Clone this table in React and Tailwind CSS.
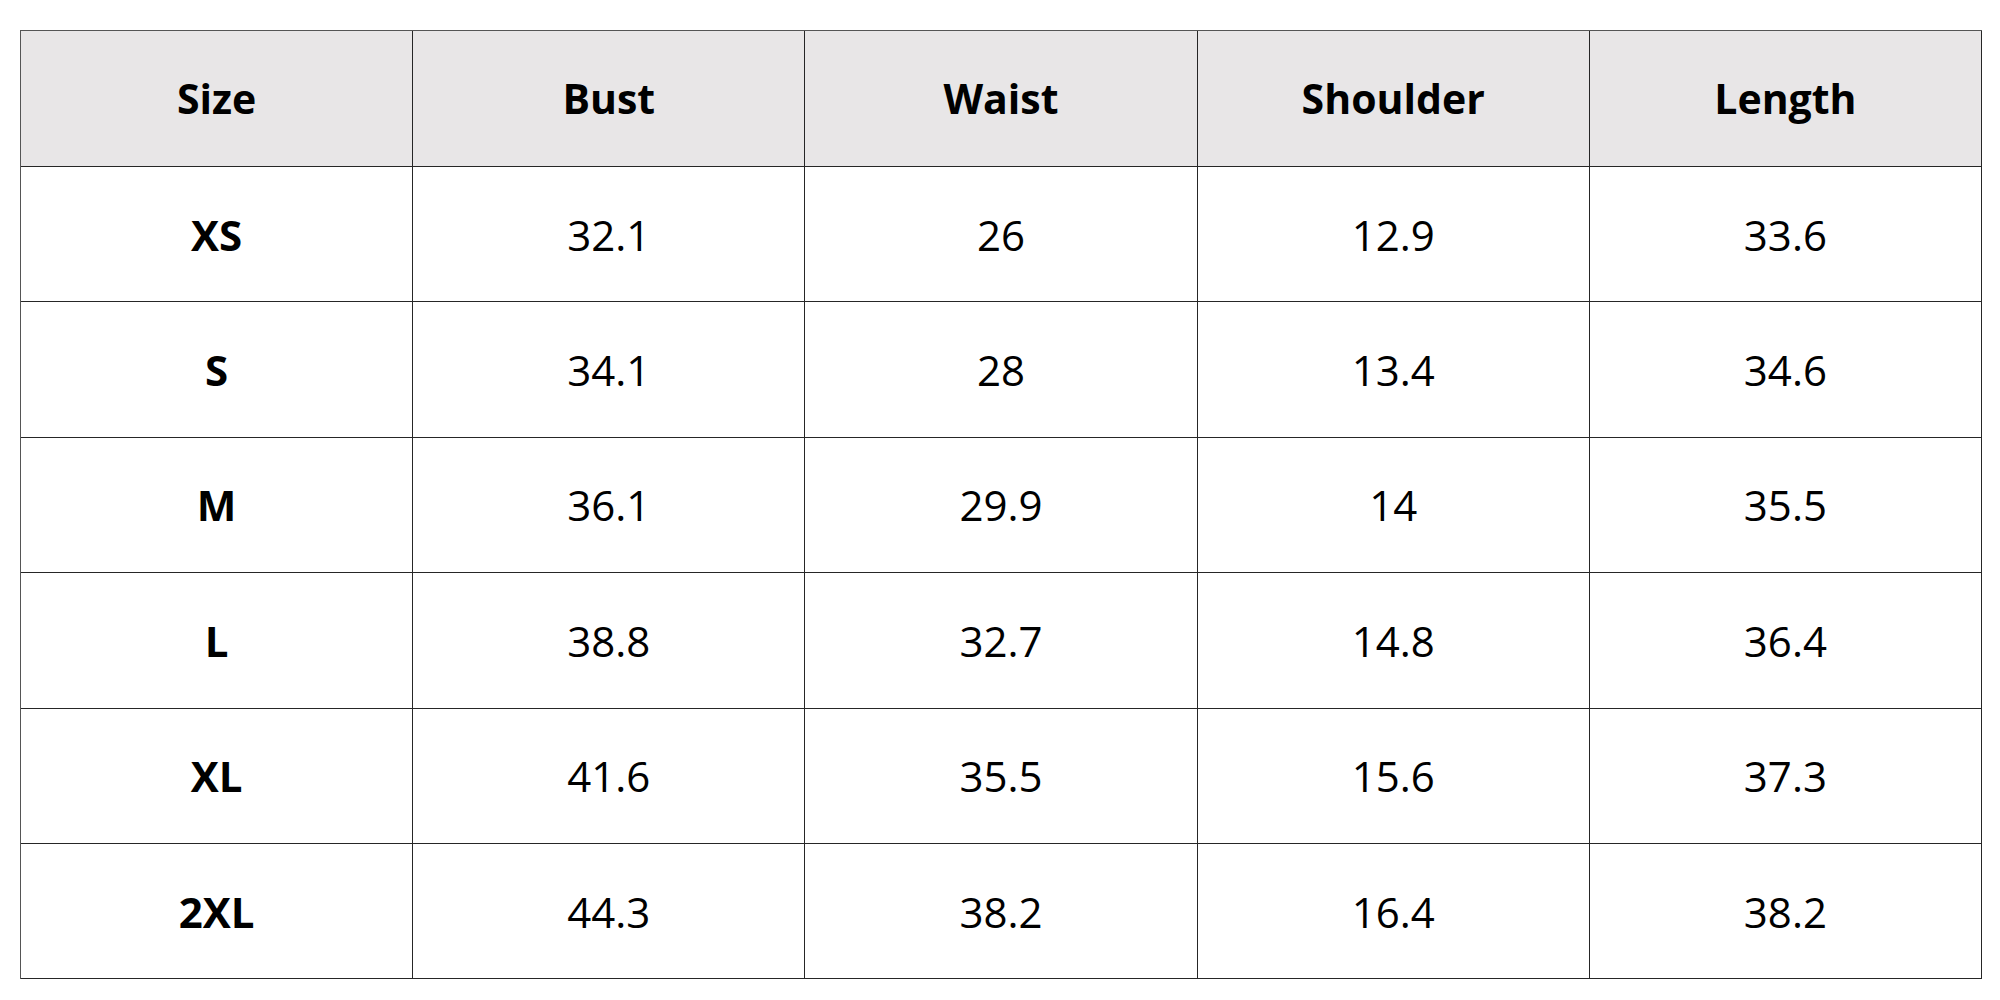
const headers = ["Size", "Bust", "Waist", "Shoulder", "Length"];

const rows = [
  ["XS", "32.1", "26", "12.9", "33.6"],
  ["S", "34.1", "28", "13.4", "34.6"],
  ["M", "36.1", "29.9", "14", "35.5"],
  ["L", "38.8", "32.7", "14.8", "36.4"],
  ["XL", "41.6", "35.5", "15.6", "37.3"],
  ["2XL", "44.3", "38.2", "16.4", "38.2"],
];

const App = () => {
  return (
    <div className="w-[2000px] h-[1000px] bg-white pt-[30px] pl-[20px] font-['Open_Sans',sans-serif] text-black">
      <div className="w-[1962px] grid grid-cols-5 border-l-[1.5px] border-t-[1.5px] border-[#555]">
        {/* header row */}
        {headers.map((h) => (
          <div
            key={h}
            className="h-[136px] bg-[#e8e6e7] border-r-[1.5px] border-b-[1.5px] border-[#262626] flex items-center justify-center text-[41px] font-bold"
          >
            {h}
          </div>
        ))}

        {/* data rows */}
        {rows.map((row) =>
          row.map((cell, i) => (
            <div
              key={row[0] + i}
              className={`h-[135.4px] border-r-[1.5px] border-b-[1.5px] border-[#262626] flex items-center justify-center text-[42px] ${
                i === 0 ? "font-bold" : "font-normal"
              }`}
            >
              {cell}
            </div>
          ))
        )}
      </div>
    </div>
  );
};

export default App;
